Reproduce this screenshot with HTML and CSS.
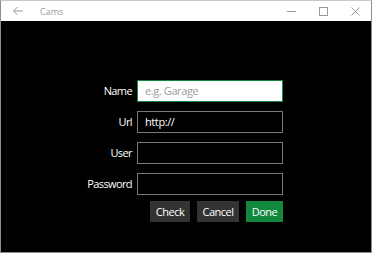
FILE: index.html
```html
<!DOCTYPE html>
<html>
<head>
	<title>Cams</title>
	<link rel="stylesheet" href="styles.css">
</head>
<body>
	<div class="window">
		<div class="titlebar">
			<svg class="back" width="12" height="10" viewBox="0 0 12 10">
				<path d="M11 5H1.5M5.5 1L1.5 5l4 4" fill="none" stroke="#9a9a9a" stroke-width="1"/>
			</svg>
			<span class="title">Cams</span>
			<div class="controls">
				<svg width="9" height="9" viewBox="0 0 9 9"><path d="M0 4.5h9" stroke="#999" stroke-width="1"/></svg>
				<svg width="9" height="9" viewBox="0 0 9 9"><rect x="0.5" y="0.5" width="8" height="8" fill="none" stroke="#999"/></svg>
				<svg width="9" height="9" viewBox="0 0 9 9"><path d="M0.5 0.5l8 8M8.5 0.5l-8 8" stroke="#999" stroke-width="1"/></svg>
			</div>
		</div>
		<div class="content">
			<div class="form">
				<label>Name</label>
				<div class="field active"><span class="hint">e.g. Garage</span></div>
				<label>Url</label>
				<div class="field">http://</div>
				<label>User</label>
				<div class="field"></div>
				<label>Password</label>
				<div class="field"></div>
				<div class="buttons">
					<div class="btn check">Check</div>
					<div class="btn cancel">Cancel</div>
					<div class="btn done">Done</div>
				</div>
			</div>
		</div>
	</div>
</body>
</html>
```

FILE: styles.css
```css
html, body {
	margin: 0;
	padding: 0;
	background: #000;
}
.window {
	width: 372px;
	height: 253px;
	box-sizing: border-box;
	border: 1px solid #8c8c8c;
	border-top-color: #c8c8c8;
	display: flex;
	flex-direction: column;
	font-family: "Open Sans", sans-serif;
}
.titlebar {
	height: 20px;
	background: #fff;
	display: flex;
	align-items: center;
}
.back {
	margin-left: 11px;
}
.title {
	margin-left: 16px;
	font-size: 9px;
	color: #9a9a9a;
}
.controls {
	margin-left: auto;
	display: flex;
	gap: 23px;
	margin-right: 11px;
}
.content {
	flex: 1;
	background: #000;
	padding-top: 59px;
}
.form {
	display: grid;
	grid-template-columns: 47px 146px;
	column-gap: 5px;
	row-gap: 9px;
	margin-left: 84px;
}
label {
	color: #fff;
	font-size: 11px;
	text-align: right;
	line-height: 22px;
	letter-spacing: -0.6px;
}
.field {
	height: 22px;
	box-sizing: border-box;
	border: 1px solid #7a7a7a;
	color: #fff;
	font-size: 11px;
	line-height: 20px;
	padding-left: 7px;
	letter-spacing: -0.4px;
}
.field.active {
	background: #fff;
	border-color: #10893e;
}
.hint {
	color: #9a9a9a;
}
.buttons {
	grid-column: 2;
	display: flex;
	justify-content: flex-end;
	gap: 7px;
	margin-top: -3px;
}
.btn {
	height: 21px;
	line-height: 21px;
	background: #333;
	color: #fff;
	font-size: 11px;
	letter-spacing: -0.5px;
	text-align: center;
}
.check {
	width: 40px;
}
.cancel {
	width: 42px;
}
.done {
	width: 37px;
	background: #10893e;
}
```
